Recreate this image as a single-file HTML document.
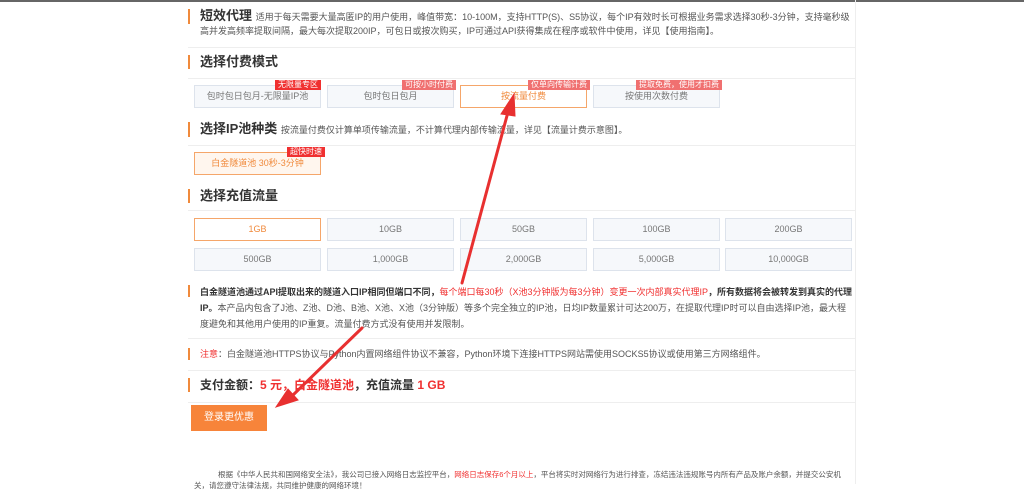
<!DOCTYPE html><html><head><meta charset="utf-8"><style>
*{margin:0;padding:0;box-sizing:border-box}
body{width:1024px;height:484px;overflow:hidden;background:#fff;font-family:"Liberation Sans","Noto Sans CJK SC",sans-serif;color:#333;position:relative}
.a{position:absolute}
.h{position:absolute;left:188px;border-left:2px solid #f08a3c;padding-left:10px;font-size:13px;font-weight:bold;color:#333;line-height:14px;white-space:nowrap}
.sep{position:absolute;left:188px;width:667px;height:1px;background:#eee}
.box{position:absolute;height:23px;border:1px solid #dde3ec;background:#f6f8fb;color:#777;font-size:9px;text-align:center;line-height:21px;white-space:nowrap}
.box.on{border-color:#f5a66a;background:#fff;color:#f08a3c}
.bd{position:absolute;height:10px;font-size:8px;line-height:10px;color:#fff;padding:0 3px;background:#f03030;white-space:nowrap}
.bd.l{background:#f07070}
.t{font-size:9px;color:#555;line-height:16px}
</style></head><body>
<div class="a" style="left:0;top:0;width:1024px;height:2px;background:#666"></div>
<div class="a" style="left:855px;top:0;width:1px;height:484px;background:#eee"></div>
<div class="h" style="top:9px">短效代理 <span style="font-weight:normal;font-size:9px;color:#555">适用于每天需要大量高匿IP的用户使用，峰值带宽：10-100M，支持HTTP(S)、S5协议，每个IP有效时长可根据业务需求选择30秒-3分钟，支持毫秒级</span></div>
<div class="a t" style="left:200px;top:23px">高并发高频率提取间隔，最大每次提取200IP，可包日或按次购买，IP可通过API获得集成在程序或软件中使用，详见【使用指南】。</div>
<div class="sep" style="top:47px"></div>
<div class="h" style="top:55px">选择付费模式</div>
<div class="sep" style="top:78px"></div>
<div class="box" style="left:194px;top:85px;width:127px">包时包日包月-无限量IP池</div>
<div class="box" style="left:327px;top:85px;width:127px">包时包日包月</div>
<div class="box on" style="left:460px;top:85px;width:127px">按流量付费</div>
<div class="box" style="left:593px;top:85px;width:127px">按使用次数付费</div>
<div class="bd" style="right:703px;top:80px">无限量专区</div>
<div class="bd l" style="right:568px;top:80px">可按小时付费</div>
<div class="bd l" style="right:434px;top:80px">仅单向传输计费</div>
<div class="bd l" style="right:302px;top:80px">提取免费，使用才扣费</div>
<div class="h" style="top:122px">选择IP池种类 <span style="font-weight:normal;font-size:9px;color:#555">按流量付费仅计算单项传输流量，不计算代理内部传输流量，详见【流量计费示意图】。</span></div>
<div class="sep" style="top:145px"></div>
<div class="box on" style="left:194px;top:152px;width:127px;background:#fff6ee">白金隧道池 30秒-3分钟</div>
<div class="bd" style="right:699px;top:147px">超快时速</div>
<div class="h" style="top:189px">选择充值流量</div>
<div class="sep" style="top:210px"></div>
<div class="box on" style="left:194px;top:218px;width:127px">1GB</div>
<div class="box" style="left:327px;top:218px;width:127px">10GB</div>
<div class="box" style="left:460px;top:218px;width:127px">50GB</div>
<div class="box" style="left:593px;top:218px;width:127px">100GB</div>
<div class="box" style="left:725px;top:218px;width:127px">200GB</div>
<div class="box" style="left:194px;top:248px;width:127px">500GB</div>
<div class="box" style="left:327px;top:248px;width:127px">1,000GB</div>
<div class="box" style="left:460px;top:248px;width:127px">2,000GB</div>
<div class="box" style="left:593px;top:248px;width:127px">5,000GB</div>
<div class="box" style="left:725px;top:248px;width:127px">10,000GB</div>
<div class="a" style="left:188px;top:285px;width:2px;height:12px;background:#f08a3c"></div>
<div class="a t" style="left:200px;top:284px;width:655px"><b style="color:#333">白金隧道池通过API提取出来的隧道入口IP相同但端口不同，</b><span style="color:#f03030">每个端口每30秒（X池3分钟版为每3分钟）变更一次内部真实代理IP</span><b style="color:#333">，所有数据将会被转发到真实的代理IP。</b>本产品内包含了J池、Z池、D池、B池、X池、X池（3分钟版）等多个完全独立的IP池，日均IP数量累计可达200万，在提取代理IP时可以自由选择IP池，最大程度避免和其他用户使用的IP重复。流量付费方式没有使用并发限制。</div>
<div class="sep" style="top:338px"></div>
<div class="a" style="left:188px;top:348px;width:2px;height:12px;background:#f08a3c"></div>
<div class="a t" style="left:200px;top:346px"><span style="color:#f03030">注意</span>：白金隧道池HTTPS协议与Python内置网络组件协议不兼容，Python环境下连接HTTPS网站需使用SOCKS5协议或使用第三方网络组件。</div>
<div class="sep" style="top:370px"></div>
<div class="h" style="top:378px;font-size:12px">支付金额：<span style="color:#f03030">5 元，白金隧道池</span>，充值流量 <span style="color:#f03030">1 GB</span></div>
<div class="sep" style="top:402px"></div>
<div class="a" style="left:191px;top:405px;width:76px;height:26px;background:#f7843a;color:#fff;font-size:10px;text-align:center;line-height:26px">登录更优惠</div>
<div class="a" style="left:218px;top:469px;font-size:7.5px;color:#555;white-space:nowrap">根据《中华人民共和国网络安全法》，我公司已接入网络日志监控平台，<span style="color:#f03030">网络日志保存6个月以上</span>，平台将实时对网络行为进行排查，冻结违法违规账号内所有产品及账户余额，并提交公安机</div>
<div class="a" style="left:194px;top:480px;font-size:7.5px;color:#555">关，请您遵守法律法规，共同维护健康的网络环境！</div>
<svg class="a" style="left:0;top:0" width="1024" height="484"><g stroke="#e83030" stroke-width="3" fill="#e83030" stroke-linecap="round"><line x1="462" y1="283" x2="508" y2="112"/><polygon points="514,94 501,114 515,116" stroke-width="1"/><line x1="362" y1="328" x2="292" y2="396"/><polygon points="276,407 288,389 298,400" stroke-width="1"/></g></svg>
</body></html>
